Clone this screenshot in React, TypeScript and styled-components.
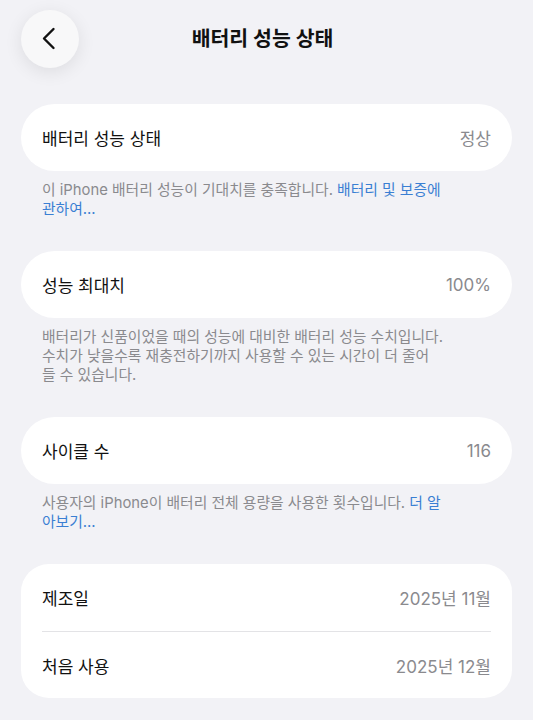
import React from "react";
import styled, { createGlobalStyle } from "styled-components";

const GlobalStyle = createGlobalStyle`
  html, body {
    margin: 0;
    padding: 0;
    background: #f2f2f6;
  }
  body {
    font-family: Inter, "Noto Sans CJK KR", "Noto Sans", sans-serif;
    color: #111;
    -webkit-font-smoothing: antialiased;
  }
`;

const Page = styled.div`
  padding: 9px 21px 0;
  display: flex;
  flex-direction: column;
`;

const Header = styled.div`
  display: flex;
  align-items: center;
  justify-content: space-between;
  height: 59px;
  margin-bottom: 36px;
`;

const BackButton = styled.button`
  width: 58px;
  height: 58px;
  border-radius: 50%;
  border: none;
  background: #f8f8f9;
  box-shadow: 0 4px 18px rgba(0, 0, 0, 0.09);
  display: flex;
  align-items: center;
  justify-content: center;
  padding: 0 2px 0 0;
`;

const Title = styled.h1`
  margin: 0 8px 4px 0;
  font-size: 20.5px;
  font-weight: 700;
  color: #111;
`;

const Spacer = styled.div`
  width: 58px;
`;

const Group = styled.section`
  display: flex;
  flex-direction: column;
  margin-bottom: 32px;
`;

const Card = styled.div<{ $multi?: boolean }>`
  background: #fff;
  border-radius: ${(p) => (p.$multi ? "28px" : "34px")};
  padding: 0 21px;
  display: flex;
  flex-direction: column;
`;

const Item = styled.div<{ $divider?: boolean }>`
  display: flex;
  align-items: center;
  justify-content: space-between;
  height: 67px;
  box-sizing: border-box;
  border-top: ${(p) => (p.$divider ? "1px solid #e3e3e6" : "none")};
`;

const Label = styled.span`
  font-size: 17px;
  color: #111;
`;

const Value = styled.span`
  font-size: 17px;
  color: #8a8a8e;
`;

const Note = styled.p`
  margin: 10px 0 0;
  padding: 0 21px;
  font-size: 14.8px;
  line-height: 19px;
  color: #8a8a8e;
`;

const Link = styled.span`
  color: #3a7fd3;
`;

interface Row {
  label: string;
  value: string;
}

interface Section {
  rows: Row[];
  note?: React.ReactNode;
}

const sections: Section[] = [
  {
    rows: [{ label: "배터리 성능 상태", value: "정상" }],
    note: (
      <>
        이 iPhone 배터리 성능이 기대치를 충족합니다. <Link>배터리 및 보증에</Link>
        <br />
        <Link>관하여...</Link>
      </>
    ),
  },
  {
    rows: [{ label: "성능 최대치", value: "100%" }],
    note: (
      <>
        배터리가 신품이었을 때의 성능에 대비한 배터리 성능 수치입니다.
        <br />
        수치가 낮을수록 재충전하기까지 사용할 수 있는 시간이 더 줄어
        <br />들 수 있습니다.
      </>
    ),
  },
  {
    rows: [{ label: "사이클 수", value: "116" }],
    note: (
      <>
        사용자의 iPhone이 배터리 전체 용량을 사용한 횟수입니다. <Link>더 알</Link>
        <br />
        <Link>아보기...</Link>
      </>
    ),
  },
  {
    rows: [
      { label: "제조일", value: "2025년 11월" },
      { label: "처음 사용", value: "2025년 12월" },
    ],
  },
];

export default function App() {
  return (
    <Page>
      <GlobalStyle />
      <Header>
        <BackButton aria-label="뒤로">
          <svg width="14" height="24" viewBox="0 0 14 24" fill="none">
            <path
              d="M11.5 2 L2 11.5 L11.5 21"
              stroke="#111"
              strokeWidth="2.4"
              strokeLinecap="round"
              strokeLinejoin="round"
            />
          </svg>
        </BackButton>
        <Title>배터리 성능 상태</Title>
        <Spacer />
      </Header>
      {sections.map((s, i) => (
        <Group key={i}>
          <Card $multi={s.rows.length > 1}>
            {s.rows.map((r, j) => (
              <Item key={j} $divider={j > 0}>
                <Label>{r.label}</Label>
                <Value>{r.value}</Value>
              </Item>
            ))}
          </Card>
          {s.note && <Note>{s.note}</Note>}
        </Group>
      ))}
    </Page>
  );
}
